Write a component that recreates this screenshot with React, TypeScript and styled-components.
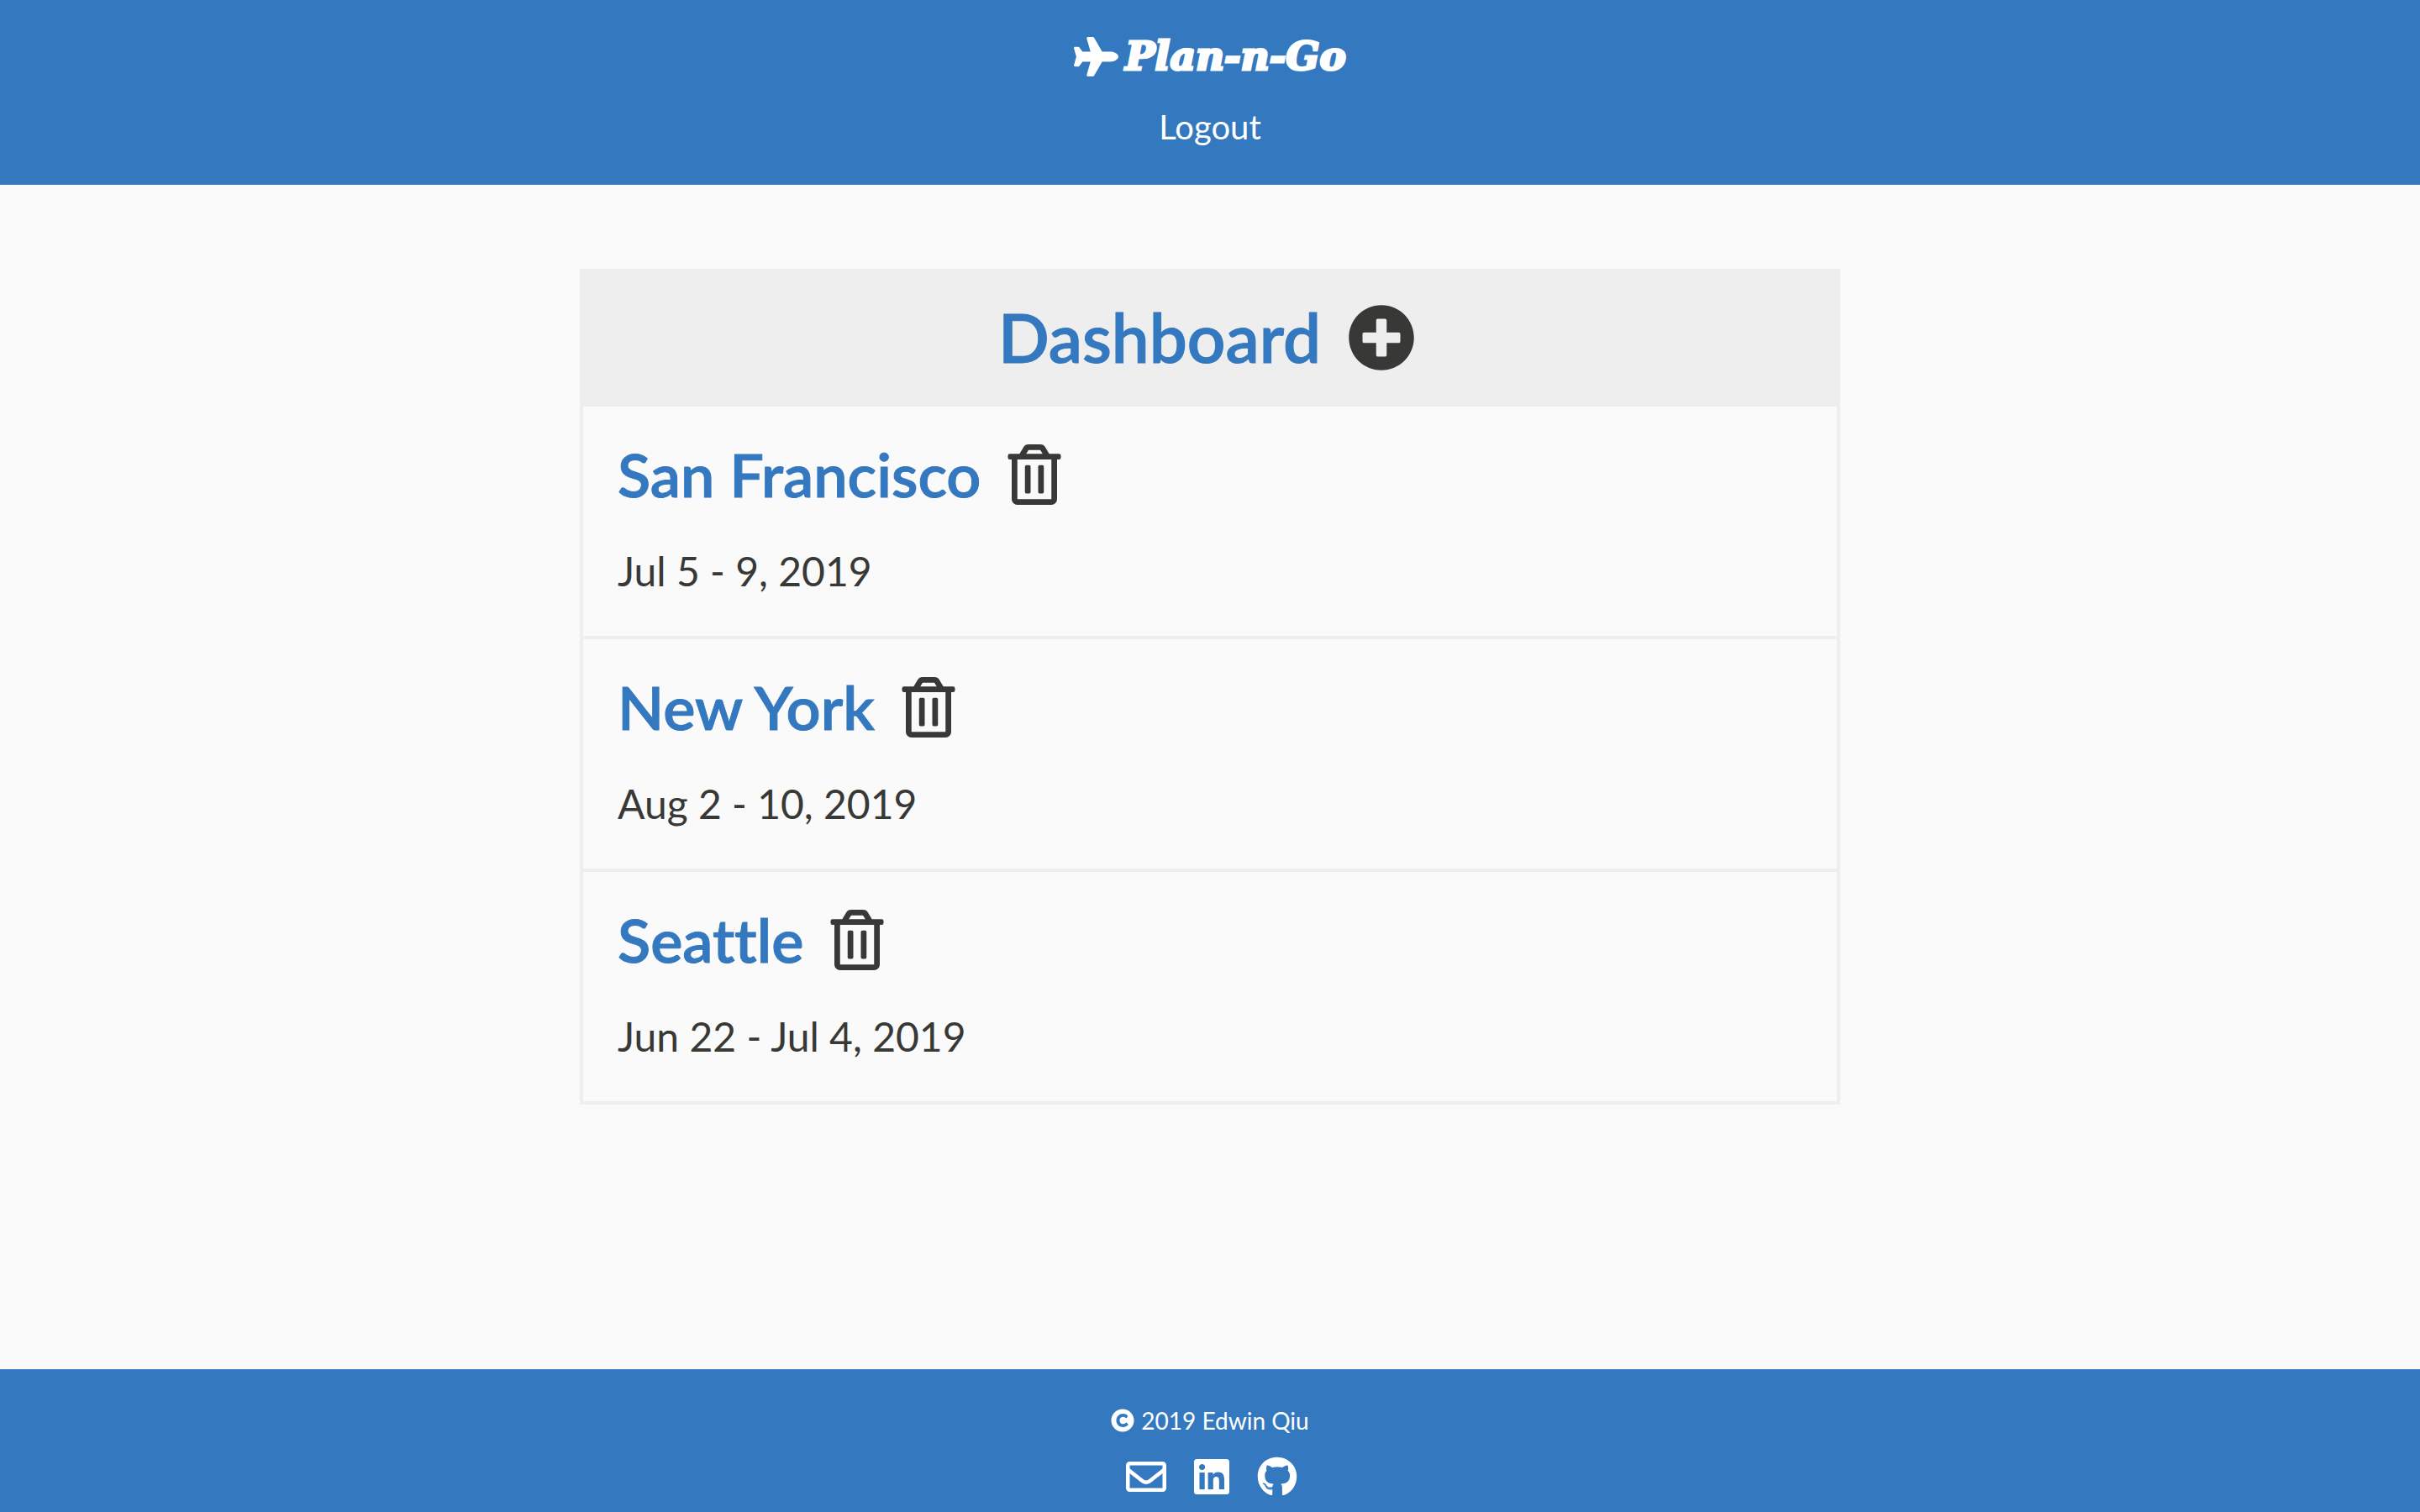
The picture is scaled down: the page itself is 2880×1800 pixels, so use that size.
import React from "react";
import styled, { createGlobalStyle } from "styled-components";
import {
  FaCopyright,
  FaGithub,
  FaLinkedin,
  FaPlane,
  FaPlusCircle,
  FaRegEnvelope,
  FaRegTrashAlt,
} from "react-icons/fa";

const colors = {
  brand: "#3478bf",
  ink: "#383936",
  page: "#fafafa",
  line: "#eeeeee",
  white: "#ffffff",
};

const GlobalStyle = createGlobalStyle`
  *, *::before, *::after { box-sizing: border-box; }
  body {
    margin: 0;
    background: ${colors.page};
    color: ${colors.ink};
    font-family: Lato, "Liberation Sans", sans-serif;
    font-variant-ligatures: none;
  }
  h1, h2, p, ul { margin: 0; padding: 0; font-weight: 400; }
  ul { list-style: none; }
  a { color: inherit; text-decoration: none; }
`;

const Page = styled.div`
  display: flex;
  flex-direction: column;
  min-height: 100vh;
`;

const Header = styled.header`
  display: flex;
  flex-direction: column;
  align-items: center;
  gap: 26px;
  padding: 35px 20px 43px;
  background: ${colors.brand};
  color: ${colors.white};
`;

const Logo = styled.a`
  display: flex;
  align-items: center;
  gap: 8px;
  font-family: "DejaVu Serif", serif;
  font-size: 47px;
  font-weight: 700;
  font-style: italic;
  line-height: 64px;
  -webkit-text-stroke: 3px currentColor;
`;

const Icon = styled.span<{ $size: number }>`
  display: flex;
  svg {
    width: auto;
    height: ${(p) => p.$size}px;
    stroke: none;
  }
`;

const LogoutButton = styled.button`
  padding: 0;
  border: 0;
  background: none;
  color: inherit;
  font: 400 40px/52px Lato, "Liberation Sans", sans-serif;
  cursor: pointer;
`;

const Main = styled.main`
  flex: 1;
  padding: 100px 20px;
`;

const Panel = styled.section`
  max-width: 1500px;
  margin: 0 auto;
  border: 4px solid ${colors.line};
`;

const PanelHeader = styled.div`
  display: flex;
  align-items: center;
  justify-content: center;
  gap: 32px;
  padding: 30px 8px 34px 0;
  background: ${colors.line};
`;

const Title = styled.h1`
  color: ${colors.brand};
  font-size: 80px;
  font-weight: 600;
  line-height: 94px;
  padding-bottom: 2px;
  -webkit-text-stroke: 1px currentColor;
`;

const IconButton = styled.button`
  display: flex;
  padding: 0;
  border: 0;
  background: none;
  color: inherit;
  cursor: pointer;
`;

const Trip = styled.li`
  display: flex;
  flex-direction: column;
  gap: 43px;
  padding: 38px 41px 48px;

  & + & {
    border-top: 4px solid ${colors.line};
  }
`;

const TripHeading = styled.div`
  display: flex;
  align-items: center;
  gap: 28px;
`;

const TripName = styled.h2`
  color: ${colors.brand};
  font-size: 72px;
  font-weight: 600;
  line-height: 84px;
  padding-bottom: 2px;
  -webkit-text-stroke: 1px currentColor;
`;

const TripDates = styled.p`
  font-size: 48px;
  line-height: 58px;
`;

const Footer = styled.footer`
  display: flex;
  flex-direction: column;
  align-items: center;
  gap: 26px;
  padding: 44px 20px 18px;
  background: ${colors.brand};
  color: ${colors.white};
`;

const Copyright = styled.p`
  display: flex;
  align-items: center;
  gap: 8px;
  font-size: 28px;
  line-height: 34px;
`;

const Contacts = styled.nav`
  display: flex;
  gap: 30px;
  padding-left: 4px;
`;

const trips = [
  { name: "San Francisco", dates: "Jul 5 - 9, 2019" },
  { name: "New York", dates: "Aug 2 - 10, 2019" },
  { name: "Seattle", dates: "Jun 22 - Jul 4, 2019" },
];

const contacts = [
  { label: "Email", href: "#email", Glyph: FaRegEnvelope },
  { label: "LinkedIn", href: "#linkedin", Glyph: FaLinkedin },
  { label: "GitHub", href: "#github", Glyph: FaGithub },
];

export default function App() {
  return (
    <>
      <GlobalStyle />
      <Page>
        <Header>
          <Logo href="#home">
            <Icon $size={53}>
              <FaPlane />
            </Icon>
            Plan-n-Go
          </Logo>
          <LogoutButton type="button">Logout</LogoutButton>
        </Header>
        <Main>
          <Panel>
            <PanelHeader>
              <Title>Dashboard</Title>
              <IconButton type="button" aria-label="Add trip">
                <Icon $size={80}>
                  <FaPlusCircle />
                </Icon>
              </IconButton>
            </PanelHeader>
            <ul>
              {trips.map((trip) => (
                <Trip key={trip.name}>
                  <TripHeading>
                    <TripName>
                      <a href="#trip">{trip.name}</a>
                    </TripName>
                    <IconButton type="button" aria-label={`Delete ${trip.name}`}>
                      <Icon $size={72}>
                        <FaRegTrashAlt />
                      </Icon>
                    </IconButton>
                  </TripHeading>
                  <TripDates>{trip.dates}</TripDates>
                </Trip>
              ))}
            </ul>
          </Panel>
        </Main>
        <Footer>
          <Copyright>
            <Icon $size={28}>
              <FaCopyright />
            </Icon>
            2019 Edwin Qiu
          </Copyright>
          <Contacts aria-label="Contact">
            {contacts.map(({ label, href, Glyph }) => (
              <a key={label} href={href} aria-label={label}>
                <Icon $size={48}>
                  <Glyph />
                </Icon>
              </a>
            ))}
          </Contacts>
        </Footer>
      </Page>
    </>
  );
}
